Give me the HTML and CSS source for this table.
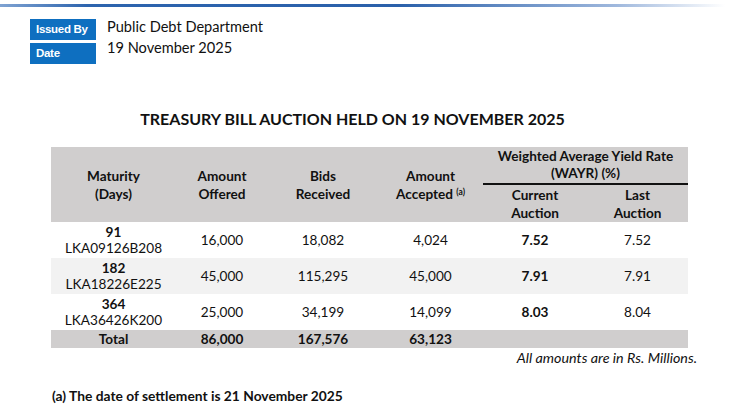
FILE: index.html
```html
<!DOCTYPE html>
<html>
<head>
<meta charset="utf-8">
<link rel="stylesheet" href="styles.css">
</head>
<body>
<div class="topline"></div>
<div class="meta">
  <div class="meta-row"><span class="tag">Issued By</span><span class="meta-val first">Public Debt Department</span></div>
  <div class="meta-row"><span class="tag">Date</span><span class="meta-val second">19 November 2025</span></div>
</div>
<h1 class="title">TREASURY BILL AUCTION HELD ON 19 NOVEMBER 2025</h1>
<table class="auction">
  <colgroup>
    <col class="c1"><col class="c2"><col class="c3"><col class="c4"><col class="c5"><col class="c6">
  </colgroup>
  <thead>
    <tr class="h1">
      <th rowspan="2">Maturity<br>(Days)</th>
      <th rowspan="2">Amount<br>Offered</th>
      <th rowspan="2">Bids<br>Received</th>
      <th rowspan="2">Amount<br>Accepted <sup>(a)</sup></th>
      <th colspan="2" class="wayr">Weighted Average Yield Rate<br>(WAYR) (%)</th>
    </tr>
    <tr class="h2">
      <th>Current<br>Auction</th>
      <th>Last<br>Auction</th>
    </tr>
  </thead>
  <tbody>
    <tr class="row">
      <td><b>91</b><br>LKA09126B208</td><td>16,000</td><td>18,082</td><td>4,024</td><td><b>7.52</b></td><td>7.52</td>
    </tr>
    <tr class="row alt">
      <td><b>182</b><br>LKA18226E225</td><td>45,000</td><td>115,295</td><td>45,000</td><td><b>7.91</b></td><td>7.91</td>
    </tr>
    <tr class="row">
      <td><b>364</b><br>LKA36426K200</td><td>25,000</td><td>34,199</td><td>14,099</td><td><b>8.03</b></td><td>8.04</td>
    </tr>
    <tr class="total">
      <td>Total</td><td>86,000</td><td>167,576</td><td>63,123</td><td></td><td></td>
    </tr>
  </tbody>
</table>
<p class="note">All amounts are in Rs. Millions.</p>
<p class="foot">(a) The date of settlement is 21 November 2025</p>
</body>
</html>
```
FILE: styles.css
```css
html, body {
  margin: 0;
  padding: 0;
  background: #ffffff;
}
body {
  width: 737px;
  font-family: "Lato", "Liberation Sans", sans-serif;
  color: #111;
}
.topline {
  margin-top: 4px;
  height: 3px;
  width: 725px;
  background: linear-gradient(to right, #7fa3d2 0%, #2d64ae 12%, #2a60aa 55%, #9fb8dd 85%, rgba(255,255,255,0) 100%);
}
.meta {
  margin: 12px 0 0 30px;
  display: flex;
  flex-direction: column;
  gap: 3px;
}
.meta-row {
  display: flex;
  align-items: flex-start;
  gap: 11px;
  height: 21px;
}
.tag {
  box-sizing: border-box;
  width: 66px;
  height: 21px;
  background: #0e6fc0;
  color: #fff;
  font-family: "Liberation Sans", sans-serif;
  font-weight: bold;
  font-size: 11.5px;
  letter-spacing: -0.3px;
  line-height: 21px;
  padding-left: 6px;
}
.meta-val {
  font-size: 14.6px;
  line-height: 18px;
  color: #111;
}
.meta-val.first { margin-top: -1px; }
.meta-val.second { margin-top: -4px; }
.title {
  margin: 45px 0 0 0;
  padding-right: 32px;
  text-align: center;
  font-size: 16px;
  font-weight: bold;
  line-height: 20px;
}
.auction {
  margin: 18px 0 0 51px;
  border-collapse: collapse;
  table-layout: fixed;
  width: 637px;
  font-size: 13.6px;
}
.c1 { width: 125px; }
.c2 { width: 92px; }
.c3 { width: 110px; }
.c4 { width: 105px; }
.c5 { width: 104px; }
.c6 { width: 101px; }
.auction th, .auction td {
  padding: 0;
  text-align: center;
  vertical-align: middle;
}
.auction thead th {
  background: #d0cece;
  font-weight: bold;
  line-height: 18px;
}
.auction sup {
  font-size: 8.5px;
  vertical-align: 4px;
  line-height: 0;
}
.h1 { height: 37px; }
.h2 { height: 38px; }
.wayr {
  border-bottom: 2px solid #111;
  line-height: 17px !important;
}
.row { height: 36px; }
.row td { line-height: 16px; }
.alt td { background: #f2f2f2; }
.total { height: 18px; }
.total td {
  background: #d0cece;
  font-weight: bold;
  line-height: 18px;
}
.note {
  margin: 2px 0 0 0;
  width: 697px;
  text-align: right;
  font-style: italic;
  font-size: 14.3px;
  line-height: 16px;
}
.foot {
  margin: 22px 0 0 52px;
  font-weight: bold;
  font-size: 13.8px;
  line-height: 16px;
}
```
